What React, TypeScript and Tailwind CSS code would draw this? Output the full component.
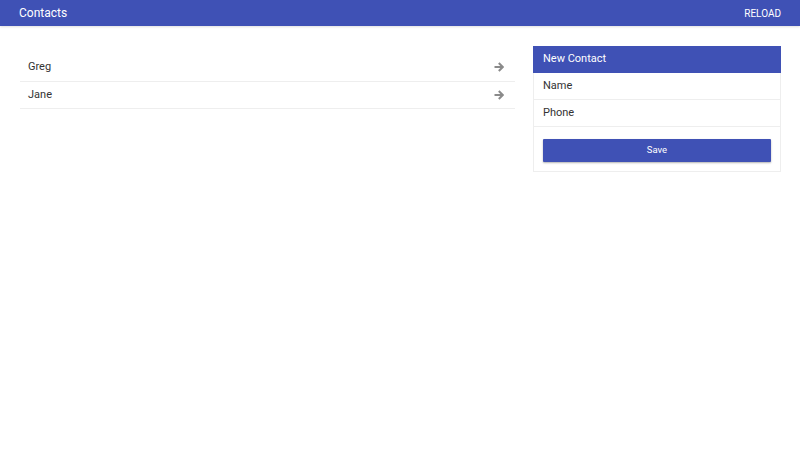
export default function App() {
  const font = { };
  const Arrow = () => (
    <svg width="10" height="10" viewBox="0 0 10 10" className="shrink-0" fill="none" stroke="#8a8a8a" strokeWidth="2">
      <path d="M0.5 5H8.5" />
      <path d="M4.8 1L8.8 5L4.8 9" />
    </svg>
  );
  return (
    <div className="w-[800px] h-[450px] bg-white overflow-hidden font-['Roboto',sans-serif]" style={font}>
      <header className="h-[26px] bg-[#3f51b5] flex items-center justify-between pl-[19px] pr-[19px] text-white shadow-[0_1px_2px_rgba(0,0,0,0.12)]">
        <span className="text-[12px]">Contacts</span>
        <span className="text-[10px]">RELOAD</span>
      </header>
      <main className="flex pl-[20px] pr-[19px] pt-[20px] gap-[18px] items-start">
        <ul className="w-[495px] mt-[8px]">
          {["Greg", "Jane"].map((n) => (
            <li key={n} className="h-[27.5px] flex items-center justify-between pl-[8px] pr-[11px] border-b border-[#eeeeee] text-[11px] text-[#333333]">
              <span>{n}</span>
              <Arrow />
            </li>
          ))}
        </ul>
        <section className="flex-1 border border-[#eeeeee] border-t-0">
          <div className="h-[27px] -mx-px bg-[#3f51b5] text-white text-[11px] flex items-center pl-[10px]">New Contact</div>
          <div className="h-[27px] flex items-center pl-[9px] border-b border-[#eeeeee] text-[11px] text-[#333333]">Name</div>
          <div className="h-[27px] flex items-center pl-[9px] border-b border-[#eeeeee] text-[11px] text-[#333333]">Phone</div>
          <div className="px-[9px] py-[9px]">
            <button className="w-full h-[23px] bg-[#3f51b5] text-white text-[9.5px] rounded-[1px] shadow-[0_1px_2px_rgba(0,0,0,0.3)]">Save</button>
          </div>
        </section>
      </main>
    </div>
  );
}
